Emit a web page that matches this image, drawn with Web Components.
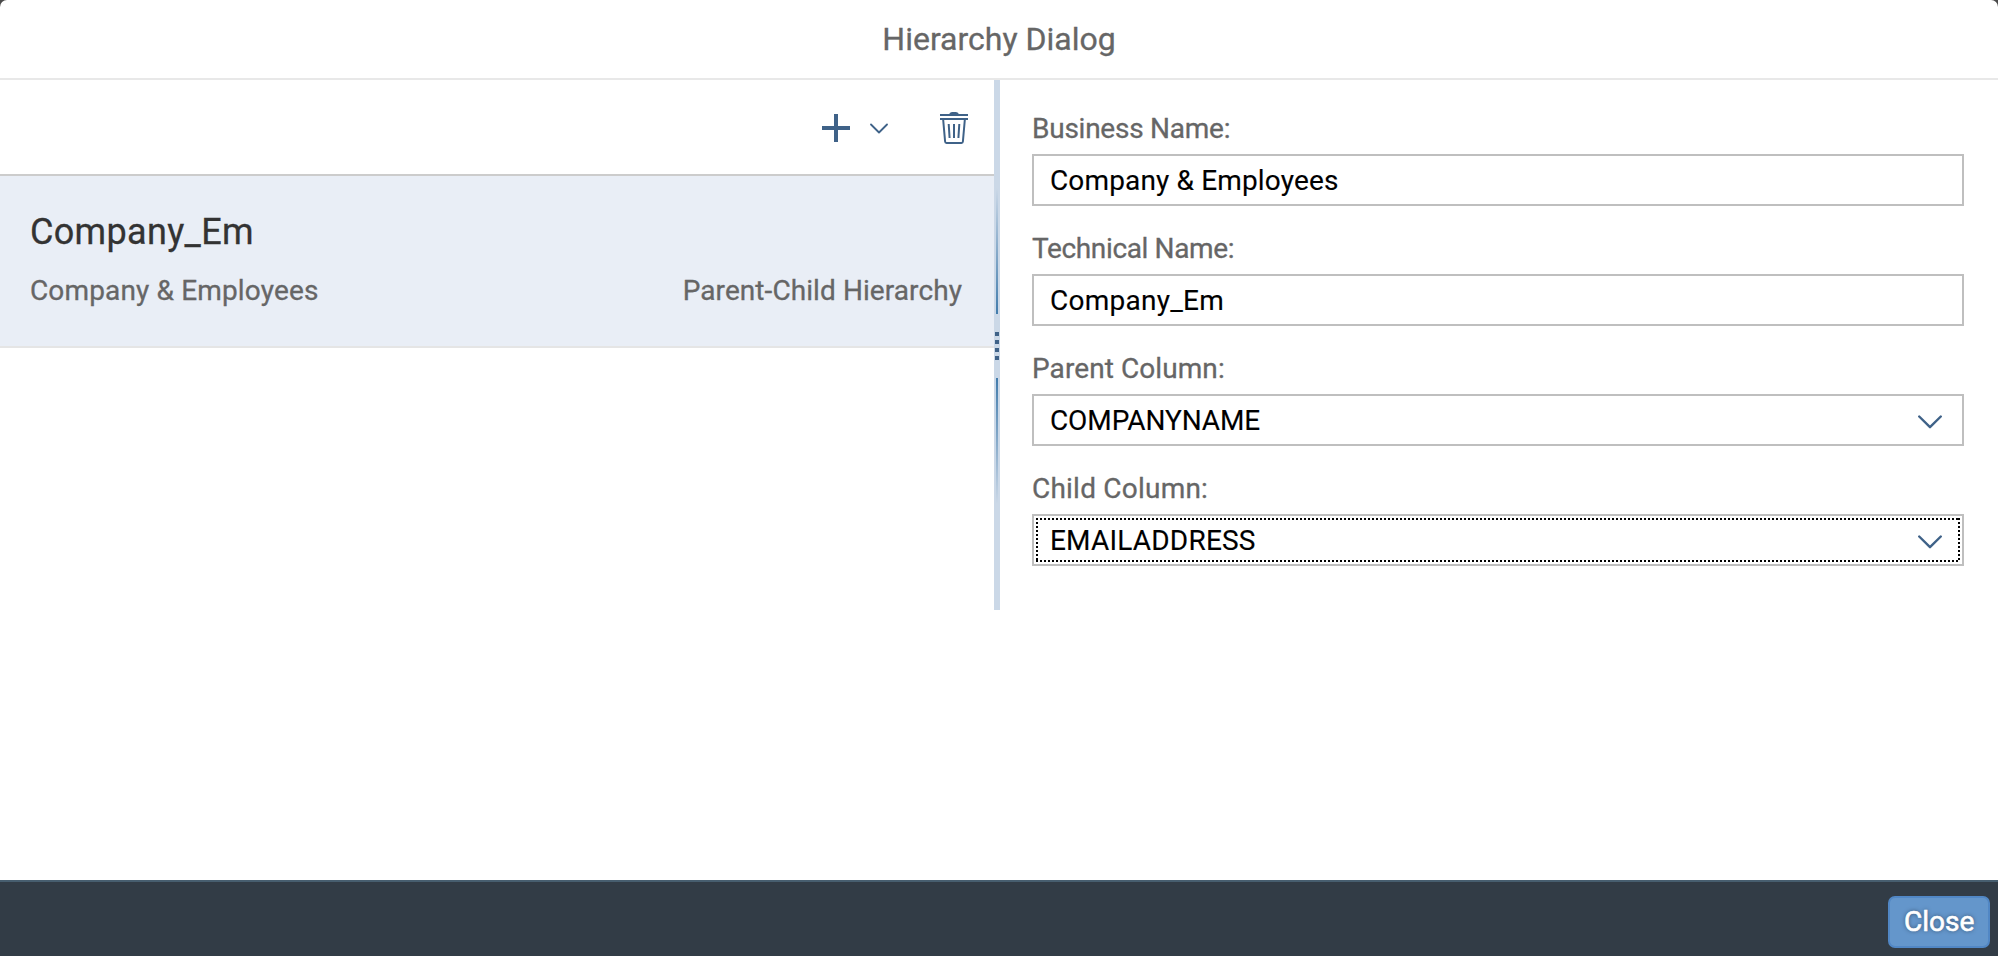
<!DOCTYPE html>
<html lang="en">
<head>
<meta charset="utf-8">
<title>Hierarchy Dialog</title>
<style>
  html, body { margin: 0; height: 100%; overflow: hidden; background: #4a4a4a; }
  body { font: 28px Roboto, "Open Sans", sans-serif; color: #666; -webkit-text-stroke: .3px currentColor; }
</style>
</head>
<body>
<h-dialog>
  <span slot="title">Hierarchy Dialog</span>
  <h-toolbar slot="master"></h-toolbar>
  <h-item slot="master">
    <span slot="title">Company_Em</span>
    <span slot="description" style="letter-spacing:.15px">Company &amp; Employees</span>
    <span slot="type" style="letter-spacing:.08px">Parent-Child Hierarchy</span>
  </h-item>
  <h-field slot="detail" label="Business Name:" style="--label-spacing:-.25px;--value-spacing:.15px">Company &amp; Employees</h-field>
  <h-field slot="detail" label="Technical Name:" style="--label-spacing:-.36px;--value-spacing:.25px">Company_Em</h-field>
  <h-field slot="detail" label="Parent Column:" select style="--label-spacing:.08px;--value-spacing:-.1px">COMPANYNAME</h-field>
  <h-field slot="detail" label="Child Column:" select focused style="--label-spacing:.22px;--value-spacing:.2px">EMAILADDRESS</h-field>
  <h-button slot="footer">Close</h-button>
</h-dialog>

<script>
const define = (name, markup, setup) => {
  const template = document.createElement('template');
  template.innerHTML = markup;
  customElements.define(name, class extends HTMLElement {
    constructor() {
      super();
      this.attachShadow({ mode: 'open' }).append(template.content.cloneNode(true));
    }
    connectedCallback() { if (setup) setup(this, this.shadowRoot); }
  });
};

define('h-toolbar', `
  <style>
    :host { display: flex; justify-content: flex-end; align-items: center; box-sizing: border-box;
      height: 96px; padding: 2px 26px 0 0; border-bottom: 2px solid #ccc; color: #3f6288; }
    svg { display: block; fill: none; stroke: currentColor; }
    .menu { margin: 1px 52px 0 20px; }
  </style>
  <svg width="28" height="28" viewBox="0 0 28 28" stroke-width="4" stroke-linecap="butt"><path d="M14 0v28M0 14h28"/></svg>
  <svg class="menu" width="18" height="11" viewBox="0 0 18 11" stroke-width="1.8" stroke-linecap="round" stroke-linejoin="round"><path d="M1 1.500l8 8 8-8"/></svg>
  <svg width="28" height="32" viewBox="0 0 28 32" stroke-width="2">
    <path d="M9 2.500Q9.500 0 12 0h4q2.500 0 3 2.500z" fill="currentColor" stroke="none"/>
    <path d="M0 3h28M0 7h28M3.200 8l1.900 21.500Q5.200 31 6.500 31h15q1.300 0 1.400-1.500L24.800 8M8.700 12l.9 14M14 12v14M19.300 12l-.9 14"/>
  </svg>`);

define('h-item', `
  <style>
    :host { display: block; box-sizing: border-box; height: 172px; padding: 36px 32px 0 30px;
      background: #e9eef6; border-bottom: 2px solid #e5e5e5; line-height: 40px; }
    .title { font-size: 36px; color: #333; letter-spacing: .33px; margin-bottom: 18px; }
    .row { display: flex; justify-content: space-between; line-height: 42px; }
  </style>
  <div class="title"><slot name="title"></slot></div>
  <div class="row"><slot name="description"></slot><slot name="type"></slot></div>`);

define('h-splitter', `
  <style>
    :host { display: flex; flex-direction: column; align-items: center; width: 6px; height: 530px; background: #cbd8e7; }
    .line { width: 2px; height: 126px; }
    .up { margin-top: 108px; background: linear-gradient(to top, #427cac, #cbd8e7); }
    .down { background: linear-gradient(to bottom, #427cac, #cbd8e7); }
    .grip { display: flex; flex-direction: column; justify-content: center; gap: 4px; height: 64px; }
    i { width: 4px; height: 4px; background: #3f6288; }
  </style>
  <div class="line up"></div>
  <div class="grip"><i></i><i></i><i></i><i></i></div>
  <div class="line down"></div>`);

define('h-field', `
  <style>
    :host { display: block; }
    .label { line-height: 40px; margin-bottom: 5px; letter-spacing: var(--label-spacing, 0); }
    .box { display: flex; align-items: center; justify-content: space-between; box-sizing: border-box;
      height: 52px; padding: 2px 20px 0 16px; border: 2px solid #bfbfbf; background: #fff;
      color: #000; line-height: 46px; letter-spacing: var(--value-spacing, 0); }
    .value { -webkit-text-stroke: .12px #000; }
    svg { display: none; margin-top: 1px; fill: none; stroke: #3f6288; stroke-width: 2.4; stroke-linecap: round; stroke-linejoin: round; }
    :host([select]) svg { display: block; }
    :host([focused]) .box {
      --h: repeating-linear-gradient(to right, #000 0 2px, transparent 2px 4px);
      --v: repeating-linear-gradient(to bottom, #000 0 2px, transparent 2px 4px);
      background-color: #fff;
      background-image: var(--h), var(--h), var(--v), var(--v);
      background-repeat: no-repeat;
      background-size: calc(100% - 4px) 2px, calc(100% - 4px) 2px, 2px calc(100% - 4px), 2px calc(100% - 4px);
      background-position: 2px 2px, 2px calc(100% - 2px), 2px 2px, calc(100% - 2px) 2px;
    }
  </style>
  <div class="label"></div>
  <div class="box"><span class="value"><slot></slot></span>
    <svg width="24" height="14" viewBox="0 0 24 14"><path d="M1.200 1.500L12 12.200 22.800 1.500"/></svg></div>`,
  (host, root) => { root.querySelector('.label').textContent = host.getAttribute('label'); });

define('h-button', `
  <style>
    :host { display: block; box-sizing: border-box; width: 102px; height: 52px; padding-left: 14px;
      border: 2px solid #5187c5; border-radius: 7px; background: #6496cb; color: #fff;
      line-height: 48px; text-shadow: 0 0 4px rgba(0, 0, 0, .5); -webkit-text-stroke: .6px #fff; }
  </style><slot></slot>`);

define('h-dialog', `
  <style>
    :host { display: flex; flex-direction: column; height: 100vh; background: #fff; border-radius: 7px 7px 0 0; overflow: hidden; }
    header { box-sizing: border-box; height: 80px; border-bottom: 2px solid #e8e8e8;
      font-size: 32px; line-height: 78px; text-align: center; }
    main { flex: 1; display: flex; align-items: flex-start; }
    .master { width: 994px; }
    .detail { flex: 1; padding: 29px 34px 0 32px; }
    .detail ::slotted(*) { height: 97px; margin-bottom: 23px; }
    footer { box-sizing: border-box; height: 76px; display: flex; justify-content: flex-end;
      padding: 14px 8px 0 0; border-top: 2px solid #475e6f; background: #323c46; }
  </style>
  <header><slot name="title"></slot></header>
  <main>
    <div class="master"><slot name="master"></slot></div>
    <h-splitter></h-splitter>
    <div class="detail"><slot name="detail"></slot></div>
  </main>
  <footer><slot name="footer"></slot></footer>`);
</script>
</body>
</html>
